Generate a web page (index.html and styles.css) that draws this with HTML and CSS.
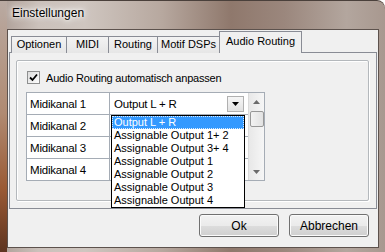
FILE: index.html
```html
<!DOCTYPE html>
<html lang="de">
<head>
    <meta charset="UTF-8">
    <title>Einstellungen</title>
    <link rel="stylesheet" href="styles.css">
</head>
<body>
    <div class="window">
        <div class="titlebar"><span class="title">Einstellungen</span></div>
        <div class="client">
            <div class="tabs">
                <div class="tab t-opt">Optionen</div>
                <div class="tab t-midi">MIDI</div>
                <div class="tab t-rout">Routing</div>
                <div class="tab t-dsp">Motif DSPs</div>
                <div class="tab t-audio active">Audio Routing</div>
            </div>
            <div class="panel">
                <div class="group">
                    <label class="check">
                        <span class="box">
                            <svg width="9" height="9" viewBox="0 0 9 9"><path d="M1 4.5 L3.5 7 L8 1.5" fill="none" stroke="#000" stroke-width="1.8"/></svg>
                        </span>
                        Audio Routing automatisch anpassen
                    </label>
                    <div class="grid">
                        <div class="rows">
                            <div class="row">
                                <div class="cell name">Midikanal 1</div>
                                <div class="cell value">
                                    <div class="combo">
                                        <span>Output L + R</span>
                                        <span class="drop-btn">
                                            <svg width="7" height="4" viewBox="0 0 7 4"><path d="M0 0 H7 L3.5 4 Z" fill="#000"/></svg>
                                        </span>
                                    </div>
                                </div>
                            </div>
                            <div class="row">
                                <div class="cell name">Midikanal 2</div>
                                <div class="cell value"></div>
                            </div>
                            <div class="row">
                                <div class="cell name">Midikanal 3</div>
                                <div class="cell value"></div>
                            </div>
                            <div class="row">
                                <div class="cell name">Midikanal 4</div>
                                <div class="cell value"></div>
                            </div>
                        </div>
                        <div class="scrollbar">
                            <div class="arrow">
                                <svg width="7" height="4" viewBox="0 0 7 4"><path d="M0 4 H7 L3.5 0 Z" fill="#6b6b6b"/></svg>
                            </div>
                            <div class="thumb"></div>
                            <div class="track"></div>
                            <div class="arrow">
                                <svg width="7" height="4" viewBox="0 0 7 4"><path d="M0 0 H7 L3.5 4 Z" fill="#6b6b6b"/></svg>
                            </div>
                        </div>
                        <ul class="dropdown">
                            <li class="selected">Output L + R</li>
                            <li>Assignable Output 1+ 2</li>
                            <li>Assignable Output 3+ 4</li>
                            <li>Assignable Output 1</li>
                            <li>Assignable Output 2</li>
                            <li>Assignable Output 3</li>
                            <li>Assignable Output 4</li>
                        </ul>
                    </div>
                </div>
            </div>
            <div class="buttons">
                <button class="btn">Ok</button>
                <button class="btn">Abbrechen</button>
            </div>
        </div>
    </div>
</body>
</html>
```

FILE: styles.css
```css
body {
    margin: 0;
    font-family: "Liberation Sans", Arial, sans-serif;
    font-size: 11px;
    color: #000;
}

.window {
    width: 385px;
    height: 252px;
    box-sizing: border-box;
    padding: 0 6px 4px 7px;
    display: flex;
    flex-direction: column;
    border-top-right-radius: 8px;
    background:
        linear-gradient(to bottom, #b9aaa2 0%, #b08a72 45%, #9a5a34 75%, #5e3420 100%) left top / 7px 100% no-repeat,
        linear-gradient(to right, #ad9e96 0%, #cbc1bb 10%, #cfc6c0 22%, #b7a89f 42%, #8f786c 60%, #9b877d 74%, #b3a69e 90%, #a8988f 100%);
    box-shadow: inset 0 1px 0 #4a403b;
    overflow: hidden;
}

.titlebar {
    height: 29px;
    display: flex;
    align-items: center;
    padding-left: 5px;
}

.title {
    font-size: 12px;
    margin-top: -3px;
    text-shadow: 0 0 6px #fff, 0 0 10px #fff, 0 0 3px #fff;
}

.client {
    flex: 1;
    border: 1px solid #5d524d;
    background-color: #f0f0f0;
    display: flex;
    flex-direction: column;
}

/* tab strip */
.tabs {
    height: 22px;
    display: flex;
    align-items: flex-end;
    padding-left: 3px;
    position: relative;
    z-index: 1;
}

.tab {
    box-sizing: border-box;
    height: 17px;
    margin-bottom: -1px;
    margin-left: -1px;
    border: 1px solid #898c95;
    border-bottom: none;
    background: linear-gradient(#f3f3f3, #e6e6e6);
    text-align: center;
    line-height: 15px;
}

.t-opt { width: 56px; margin-left: 0; }
.t-midi { width: 43px; }
.t-rout { width: 50px; }
.t-dsp { width: 63px; }

.tab.active {
    width: 83px;
    height: 22px;
    line-height: 19px;
    background: #f0f0f0;
}

.panel {
    height: 157px;
    box-sizing: border-box;
    margin: 0 1px 0 1px;
    border: 1px solid #898c95;
    background-color: #f0f0f0;
    padding: 7px 7px 7px 6px;
}

.group {
    height: 100%;
    box-sizing: border-box;
    border: 1px solid #b4b8bc;
    border-radius: 2px;
    box-shadow: inset 1px 1px 0 #fff, 1px 1px 0 #fff;
    padding: 10px 0 0 9px;
}

.check {
    display: flex;
    align-items: center;
    height: 13px;
    margin-left: 1px;
    letter-spacing: -0.2px;
}

.box {
    box-sizing: border-box;
    width: 13px;
    height: 13px;
    border: 1px solid #8e8f8f;
    background: linear-gradient(135deg, #dcdcdc, #fdfdfd);
    display: flex;
    align-items: center;
    justify-content: center;
    margin-right: 6px;
}

/* property grid */
.grid {
    position: relative;
    margin-top: 8px;
    width: 237px;
    display: flex;
    border: 1px solid #a5acb5;
    background-color: #fff;
}

.rows {
    flex: 1;
}

.row {
    display: flex;
    height: 21px;
    border-bottom: 1px solid #a5acb5;
}

.row:last-child {
    border-bottom: none;
}

.cell {
    display: flex;
    align-items: center;
}

.name {
    width: 83px;
    padding-left: 3px;
    box-sizing: border-box;
    border-right: 1px solid #a5acb5;
    font-size: 11.5px;
    letter-spacing: -0.2px;
}

.value {
    flex: 1;
}

.combo {
    flex: 1;
    display: flex;
    align-items: center;
    justify-content: space-between;
    padding-left: 4px;
    padding-right: 4px;
    font-size: 11.5px;
    letter-spacing: -0.2px;
}

.drop-btn {
    box-sizing: border-box;
    width: 17px;
    height: 16px;
    border: 1px solid #b0b0b0;
    background: linear-gradient(#f6f6f6, #e2e2e2);
    display: flex;
    align-items: center;
    justify-content: center;
}

.scrollbar {
    width: 15px;
    border-left: 1px solid #dadada;
    background: linear-gradient(to right, #e8e8e8, #f6f6f6);
    display: flex;
    flex-direction: column;
    align-items: center;
}

.arrow {
    height: 17px;
    display: flex;
    align-items: center;
    justify-content: center;
}

.thumb {
    box-sizing: border-box;
    width: 14px;
    height: 16px;
    margin-top: 1px;
    border: 1px solid #989898;
    border-radius: 2px;
    background: linear-gradient(to right, #f3f3f3, #e2e2e2);
}

.track {
    flex: 1;
}

.dropdown {
    position: absolute;
    left: 84px;
    top: 22px;
    width: 134px;
    box-sizing: border-box;
    margin: 0;
    padding: 0;
    list-style: none;
    border: 1px solid #000;
    background-color: #fff;
    font-size: 11px;
}

.dropdown li {
    height: 13px;
    line-height: 13px;
    padding-left: 2px;
    white-space: nowrap;
}

.dropdown li.selected {
    background-color: #3399ff;
    color: #fff;
    outline: 1px dotted #d9ecff;
    outline-offset: -1px;
}

/* dialog buttons */
.buttons {
    display: flex;
    justify-content: flex-end;
    gap: 10px;
    padding: 5px 9px 0 0;
}

.btn {
    width: 80px;
    height: 23px;
    font-family: "Liberation Sans", Arial, sans-serif;
    font-size: 12px;
    border: 1px solid #707070;
    border-radius: 3px;
    background: linear-gradient(#f2f2f2 0%, #ebebeb 50%, #dddddd 51%, #cfcfcf 100%);
    box-shadow: inset 0 0 0 1px #fbfbfb;
    padding: 0;
}
```
